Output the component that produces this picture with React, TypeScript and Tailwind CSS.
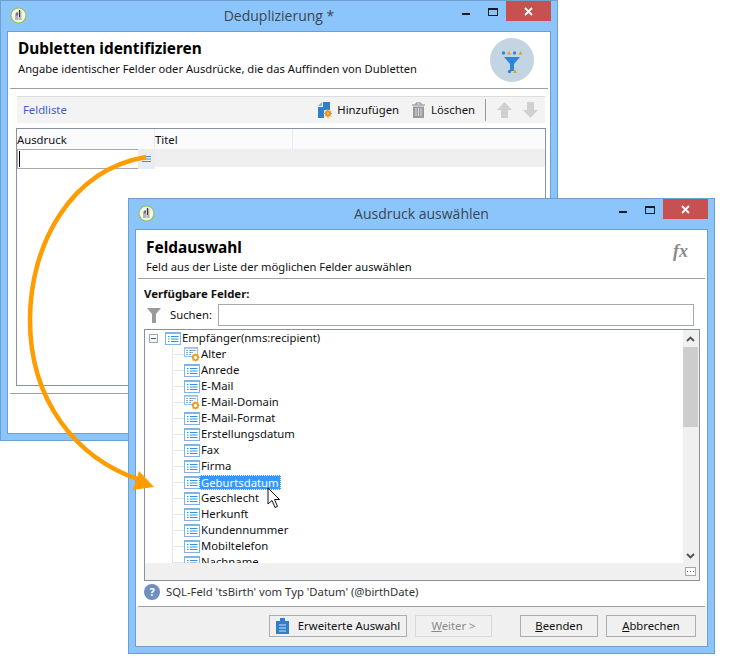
const UI = "font-['Noto_Sans',sans-serif]";

const FIELDS: { name: string; calc?: boolean; selected?: boolean }[] = [
  { name: "Alter", calc: true },
  { name: "Anrede" },
  { name: "E-Mail" },
  { name: "E-Mail-Domain", calc: true },
  { name: "E-Mail-Format" },
  { name: "Erstellungsdatum" },
  { name: "Fax" },
  { name: "Firma" },
  { name: "Geburtsdatum", selected: true },
  { name: "Geschlecht" },
  { name: "Herkunft" },
  { name: "Kundennummer" },
  { name: "Mobiltelefon" },
  { name: "Nachname" },
];

function AppIcon() {
  return (
    <svg width="17" height="17" viewBox="0 0 17 17" className="shrink-0">
      <circle cx="8.500" cy="8.500" r="7.500" fill="#f4f4f0" stroke="#93c44a" strokeWidth="1.200" />
      <path d="M5 6.500l3-1.500v8H5zM8.500 3.500h3V13h-3z" fill="#b5b5b5" />
      <path d="M9.500 3v7M7 5.500v3" stroke="#333" strokeWidth="1" />
    </svg>
  );
}

function ListIcon({ calc }: { calc?: boolean }) {
  if (calc) {
    return (
      <svg width="16" height="15" viewBox="0 0 16 15" className="shrink-0">
        <rect x="0.500" y="0.500" width="13" height="9" fill="#fff" stroke="#9dbfe0" />
        <path d="M0 1h14" stroke="#9dbfe0" strokeWidth="1.500" />
        <path d="M2 3.500h2M5 3.500h7M2 5.500h2M5 5.500h4M2 7.500h2M5 7.500h2" stroke="#7fa9d2" />
        <circle cx="11.500" cy="10.500" r="2.600" fill="#fff" stroke="#ef9a1a" strokeWidth="1.700" />
        <path d="M11.500 6.500v1.500M11.500 13v1.500M7.500 10.500H9M14 10.500h1.500M8.700 7.700l1 1M13.300 12.300l1 1M14.300 7.700l-1 1M9.700 12.300l-1 1" stroke="#ef9a1a" strokeWidth="1.100" />
      </svg>
    );
  }
  return (
    <svg width="16" height="13" viewBox="0 0 16 13" className="shrink-0">
      <rect x="0.500" y="0.500" width="15" height="12" fill="#fff" stroke="#7fb4e6" />
      <path d="M0 1h16" stroke="#7fb4e6" strokeWidth="2" />
      <path d="M3 4.500h1.500M6 4.500h7.500M3 7h1.500M6 7h7.500M3 9.500h1.500M6 9.500h7.500" stroke="#3c8fdc" />
    </svg>
  );
}

function TitleBar({ title }: { title: string }) {
  return (
    <div className="relative flex h-[30px] shrink-0 items-center justify-center">
      <div className="absolute left-[3px] top-[6px]">
        <AppIcon />
      </div>
      <span className="font-['Open_Sans',sans-serif] text-[14px] leading-none text-[#3a4652]">{title}</span>
      <div className="absolute right-0 top-0 flex items-start">
        <div className="mt-[12px] h-[2px] w-[8px] bg-[#1c1c1c]" />
        <div className="ml-[18px] mt-[7px] h-[8px] w-[10px] border border-t-2 border-[#1c1c1c]" />
        <div className="ml-[8px] flex h-[20px] w-[45px] items-center justify-center bg-[#c75050]">
          <svg width="9" height="9" viewBox="0 0 9 9">
            <path d="M1 1l7 7M8 1L1 8" stroke="#fff" strokeWidth="1.800" />
          </svg>
        </div>
      </div>
    </div>
  );
}

function Btn({ children, disabled, className }: { children: React.ReactNode; disabled?: boolean; className: string }) {
  return (
    <div
      className={`flex h-[22px] shrink-0 items-center justify-center border text-[11.3px] ${
        disabled ? "border-[#d9d9d9] text-[#8a8a8a]" : "border-[#adadad] text-[#111]"
      } ${className}`}
    >
      {children}
    </div>
  );
}

function DedupWindow() {
  return (
    <div className={`absolute left-0 top-0 flex h-[441px] w-[558px] flex-col border border-[#6f9fcf] bg-[#8bc5fb] px-[6px] pb-[6px] ${UI}`}>
      <TitleBar title="Deduplizierung *" />
      <div className="flex flex-1 flex-col border border-[#6f9fcf] bg-white px-[2px]">
        <div className="flex h-[56px] items-center justify-between pl-[8px] pr-[14px]">
          <div className="-mt-[4px]">
            <div className="text-[15.4px] font-bold leading-[20px] text-black">Dubletten identifizieren</div>
            <div className="mt-[2px] text-[11.2px] leading-[16px] text-[#111]">
              Angabe identischer Felder oder Ausdrücke, die das Auffinden von Dubletten
            </div>
          </div>
          <svg width="44" height="44" viewBox="0 0 44 44">
            <circle cx="22" cy="22" r="22" fill="#c3d5e2" />
            <path d="M14 19h16l-6 7v7h-4v-7z" fill="#2e86d9" />
            <circle cx="13.500" cy="15" r="1.700" fill="#2e86d9" />
            <circle cx="24.500" cy="15" r="1.700" fill="#2e86d9" />
            <path d="M19 13l2 3.500h-4zM30.500 13l2 3.500h-4zM25 31.500l2 3.500h-4z" fill="#ef9a1a" />
            <circle cx="19.500" cy="33.500" r="1.700" fill="#2e86d9" />
          </svg>
        </div>
        <div className="h-px bg-[#a0a0a0]" />
        <div className="ml-[7px] mr-[3px] mt-[7px] flex h-[27px] items-center border-t border-[#dcdcdc] bg-[#f3f3f3] pl-[6px] pr-[7px] text-[11.3px] text-[#111]">
          <span className="text-[#3f5fc4]">Feldliste</span>
          <svg width="14" height="16" viewBox="0 0 14 16" className="ml-auto">
            <path d="M0 4l4-4v4z" fill="#7fb4e6" />
            <path d="M5 0h7v8H6v8H0V5h5z" fill="#2f7fc9" />
            <circle cx="10" cy="11.500" r="3" fill="#f08c14" />
            <path d="M10 7v9M5.500 11.500h9M7 8.500l6 6M13 8.500l-6 6" stroke="#f08c14" />
            <circle cx="10" cy="11.500" r="1" fill="#ffd9a0" />
          </svg>
          <span className="ml-[5px]">Hinzufügen</span>
          <svg width="15" height="17" viewBox="0 0 15 17" className="ml-[12px]">
            <path d="M1 3h13M5 3V1h5v2" fill="none" stroke="#8a8a8a" />
            <path d="M2 4.500h11V16H2z" fill="#9a9a9a" />
            <path d="M5 6v8M7.500 6v8M10 6v8" stroke="#e0e0e0" />
          </svg>
          <span className="ml-[5px]">Löschen</span>
          <div className="ml-[10px] h-[22px] w-px bg-[#9a9a9a]" />
          <svg width="15" height="16" viewBox="0 0 15 16" className="ml-[11px]">
            <path d="M7.500 0L15 8h-4v8H4V8H0z" fill="#d0d0d0" />
          </svg>
          <svg width="15" height="16" viewBox="0 0 15 16" className="ml-[11px]">
            <path d="M7.500 16L15 8h-4V0H4v8H0z" fill="#d0d0d0" />
          </svg>
        </div>
        <div className="ml-[6px] mr-[2px] mt-[5px] flex h-[258px] flex-col border border-[#8a929b] bg-white text-[11.3px] text-[#111]">
          <div className="flex h-[20px] shrink-0 items-center bg-[#fbfbfd]">
            <div className="flex h-full w-[138px] items-center border-r border-[#e4ecf6] pt-[2px]">Ausdruck</div>
            <div className="flex h-full w-[138px] items-center border-r border-[#e4ecf6] pt-[2px]">Titel</div>
          </div>
          <div className="flex h-[18px] shrink-0 items-start bg-[#efefef]">
            <div className="h-[20px] w-[121px] border-y border-l border-[#a9a9a9] bg-white pl-px pt-px">
              <div className="h-[16px] w-px bg-black" />
            </div>
            <div className="flex h-[20px] w-[17px] items-center justify-center bg-[#ececec]">
              <svg width="9" height="8" viewBox="0 0 9 8">
                <path d="M0 1.500h9M0 4h9M0 6.500h9" stroke="#3c8fdc" strokeWidth="1.200" />
              </svg>
            </div>
          </div>
        </div>
        <div className="mt-[7px] h-px bg-[#a0a0a0]" />
      </div>
    </div>
  );
}

function TreeRow({ name, calc, selected }: { name: string; calc?: boolean; selected?: boolean }) {
  return (
    <div className="relative flex h-[16px] shrink-0 items-center pl-[39px]">
      <div className="absolute left-[27px] top-[8px] h-px w-[12px] bg-[#e6e6e6]" />
      <div className="flex w-[17px] justify-start">
        <ListIcon calc={calc} />
      </div>
      {selected ? (
        <span className="-ml-[2px] border border-dotted border-white bg-[#3399ff] px-px leading-[13px] text-white">{name}</span>
      ) : (
        <span>{name}</span>
      )}
    </div>
  );
}

function FieldTree() {
  return (
    <div className="relative ml-[8px] mr-[7px] mt-[3px] flex h-[252px] shrink-0 border border-[#8a929b] bg-white text-[11.3px] text-[#111]">
      <div className="flex min-w-0 flex-1 flex-col">
        <div className="relative flex-1 overflow-hidden">
          <div className="absolute bottom-0 left-[27px] top-[16px] w-px bg-[#e6e6e6]" />
          <div className="relative flex h-[16px] items-center pl-[4px]">
            <div className="flex h-[9px] w-[9px] items-center justify-center border border-[#9aa7b5] bg-[#f8f8f8]">
              <div className="h-px w-[5px] bg-[#4a5a6a]" />
            </div>
            <div className="ml-[7px]">
              <ListIcon />
            </div>
            <span className="ml-px">Empfänger(nms:recipient)</span>
          </div>
          {FIELDS.map((f) => (
            <TreeRow key={f.name} name={f.name} calc={f.calc} selected={f.selected} />
          ))}
        </div>
        <div className="h-[17px] shrink-0 bg-[#f0f0f0]" />
      </div>
      <div className="flex w-[16px] shrink-0 flex-col items-center bg-[#f0f0f0] pr-px">
        <div className="flex h-[17px] items-center">
          <svg width="9" height="6" viewBox="0 0 9 6">
            <path d="M1 5l3.500-3.500L8 5" fill="none" stroke="#505050" strokeWidth="1.800" />
          </svg>
        </div>
        <div className="h-[80px] w-[15px] bg-[#cdcdcd]" />
        <div className="flex-1" />
        <div className="flex h-[17px] items-center">
          <svg width="9" height="6" viewBox="0 0 9 6">
            <path d="M1 1l3.500 3.500L8 1" fill="none" stroke="#505050" strokeWidth="1.800" />
          </svg>
        </div>
        <div className="mb-[4px] mt-[3px] flex h-[9px] w-[11px] items-center justify-center border border-[#a8a8a8] bg-white">
          <svg width="7" height="1" viewBox="0 0 7 1">
            <path d="M0 .5h1M3 .5h1M6 .5h1" stroke="#555" />
          </svg>
        </div>
      </div>
    </div>
  );
}

function FieldWindow() {
  return (
    <div className={`absolute left-[128px] top-[198px] flex h-[456px] w-[587px] flex-col border border-[#6f9fcf] bg-[#8bc5fb] px-[6px] pb-[6px] ${UI}`}>
      <TitleBar title="Ausdruck auswählen" />
      <div className="flex flex-1 flex-col border border-[#6f9fcf] bg-white pt-[1px]">
        <div className="mx-[2px] flex h-[47px] shrink-0 items-start justify-between pl-[8px] pr-[17px] pt-[7px]">
          <div>
            <div className="text-[15.4px] font-bold leading-[20px] text-black">Feldauswahl</div>
            <div className="mt-[1px] text-[11.2px] leading-[16px] text-[#111]">Feld aus der Liste der möglichen Felder auswählen</div>
          </div>
          <span className="mt-[3px] font-['Liberation_Serif',serif] text-[18px] font-bold italic leading-[20px] text-[#8a8a8a]">fx</span>
        </div>
        <div className="mx-[2px] h-px shrink-0 bg-[#a0a0a0]" />
        <div className="ml-[8px] mt-[7px] text-[11.4px] font-bold leading-[16px] text-[#111]">Verfügbare Felder:</div>
        <div className="mr-[13px] mt-[2px] flex h-[22px] shrink-0 items-center pl-[11px] text-[11.3px] text-[#111]">
          <svg width="14" height="15" viewBox="0 0 14 15">
            <path d="M0 0h14L9 6v9H5V6z" fill="#9a9a9a" />
          </svg>
          <span className="ml-[9px] w-[48px]">Suchen:</span>
          <div className="h-[22px] flex-1 border border-[#a9a9a9] bg-white" />
        </div>
        <FieldTree />
        <div className="ml-[8px] flex h-[22px] shrink-0 items-center text-[11.3px] text-[#333]">
          <svg width="16" height="16" viewBox="0 0 16 16">
            <circle cx="8" cy="8" r="8" fill="#6f8fbf" />
            <text x="8" y="12" textAnchor="middle" fontSize="11" fontWeight="700" fill="#fff" fontFamily="Noto Sans, sans-serif">?</text>
          </svg>
          <span className="ml-[6px]">SQL-Feld 'tsBirth' vom Typ 'Datum' (@birthDate)</span>
        </div>
        <div className="mx-[2px] mt-[3px] h-px shrink-0 bg-[#a0a0a0]" />
        <div className="flex flex-1 items-start bg-[#f0f0f0] pt-[8px]">
          <Btn className="ml-[133px] w-[138px]">
            <svg width="13" height="16" viewBox="0 0 13 16">
              <path d="M0 3h4V0h5v3h4v13H0z" fill="#2f7fc9" />
              <path d="M3 7h7M3 10h7M3 13h7" stroke="#cfe3f6" />
            </svg>
            <span className="ml-[9px]">Erweiterte Auswahl</span>
          </Btn>
          <Btn disabled className="ml-[8px] w-[77px]">
            <span><u>W</u>eiter &gt;</span>
          </Btn>
          <Btn className="ml-[28px] w-[78px]">
            <span><u>B</u>eenden</span>
          </Btn>
          <Btn className="ml-[8px] w-[90px]">
            <span><u>A</u>bbrechen</span>
          </Btn>
        </div>
      </div>
    </div>
  );
}

function Overlay() {
  return (
    <svg width="730" height="671" viewBox="0 0 730 671" className="pointer-events-none absolute left-0 top-0">
      <path d="M146 157C70 170 30 245 30 320C30 400 75 458 140 480" fill="none" stroke="#ff9c00" strokeWidth="4.500" />
      <path d="M139 471L154 487L133 490z" fill="#ff9c00" />
      <path d="M268 488v16l4-3.500 3 7 2.500-1-3-7h5z" fill="#fff" stroke="#111" strokeWidth="1" />
    </svg>
  );
}

export default function App() {
  return (
    <div className="relative h-[671px] w-[730px] overflow-hidden bg-white">
      <DedupWindow />
      <FieldWindow />
      <Overlay />
    </div>
  );
}
